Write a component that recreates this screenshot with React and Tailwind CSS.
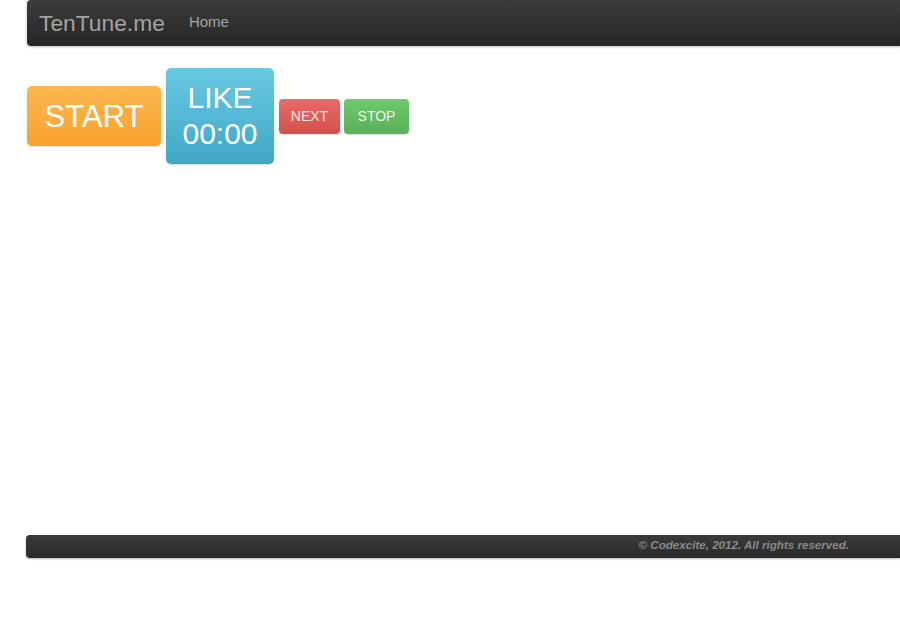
export default function App() {
  return (
    <div className="w-[900px] h-[628px] overflow-hidden bg-white font-['Liberation_Sans',Arial,sans-serif]">
      {/* Navbar */}
      <div className="pl-[27px]">
        <div className="h-[46px] rounded-l-[4px] bg-gradient-to-b from-[#3c3c3c] to-[#262626] shadow-[0_1px_3px_rgba(0,0,0,0.25)] flex items-center">
          <span className="ml-[12px] text-[22.8px] text-[#a3a3a3] leading-none">TenTune.me</span>
          <span className="ml-[24px] text-[15px] text-[#a3a3a3] leading-none -mt-[3px]">Home</span>
        </div>
      </div>

      {/* Controls */}
      <div className="pl-[27px] mt-[22px] flex items-center">
        <button className="w-[134px] h-[60px] rounded-[5px] bg-gradient-to-b from-[#fbb64f] to-[#f7a32a] text-white text-[31px] leading-none shadow-[0_1px_2px_rgba(0,0,0,0.15)]">
          START
        </button>
        <button className="ml-[5px] w-[108px] h-[96px] rounded-[5px] bg-gradient-to-b from-[#68c9e3] to-[#40a7c5] text-white text-[30px] leading-[36px] shadow-[0_1px_2px_rgba(0,0,0,0.15)] flex flex-col items-center justify-center">
          <span>LIKE</span>
          <span>00:00</span>
        </button>
        <button className="ml-[5px] w-[61px] h-[35px] rounded-[4px] bg-gradient-to-b from-[#e96b67] to-[#d0504b] text-[#f6e3e3] text-[14px] leading-none shadow-[0_1px_2px_rgba(0,0,0,0.15)]">
          NEXT
        </button>
        <button className="ml-[4px] w-[65px] h-[35px] rounded-[4px] bg-gradient-to-b from-[#6ec96e] to-[#58b158] text-[#eaf6e4] text-[14px] leading-none shadow-[0_1px_2px_rgba(0,0,0,0.15)]">
          STOP
        </button>
      </div>

      {/* Footer */}
      <div className="pl-[26px] mt-[371px]">
        <div className="h-[23px] rounded-l-[4px] bg-gradient-to-b from-[#3a3a3a] to-[#2a2a2a] shadow-[0_1px_2px_rgba(0,0,0,0.3)] flex items-center justify-end pr-[51px]">
          <span className="text-[11.6px] italic font-bold text-[#8a8a8a] leading-none -mt-[3px]">© Codexcite, 2012. All rights reserved.</span>
        </div>
      </div>
    </div>
  )
}
